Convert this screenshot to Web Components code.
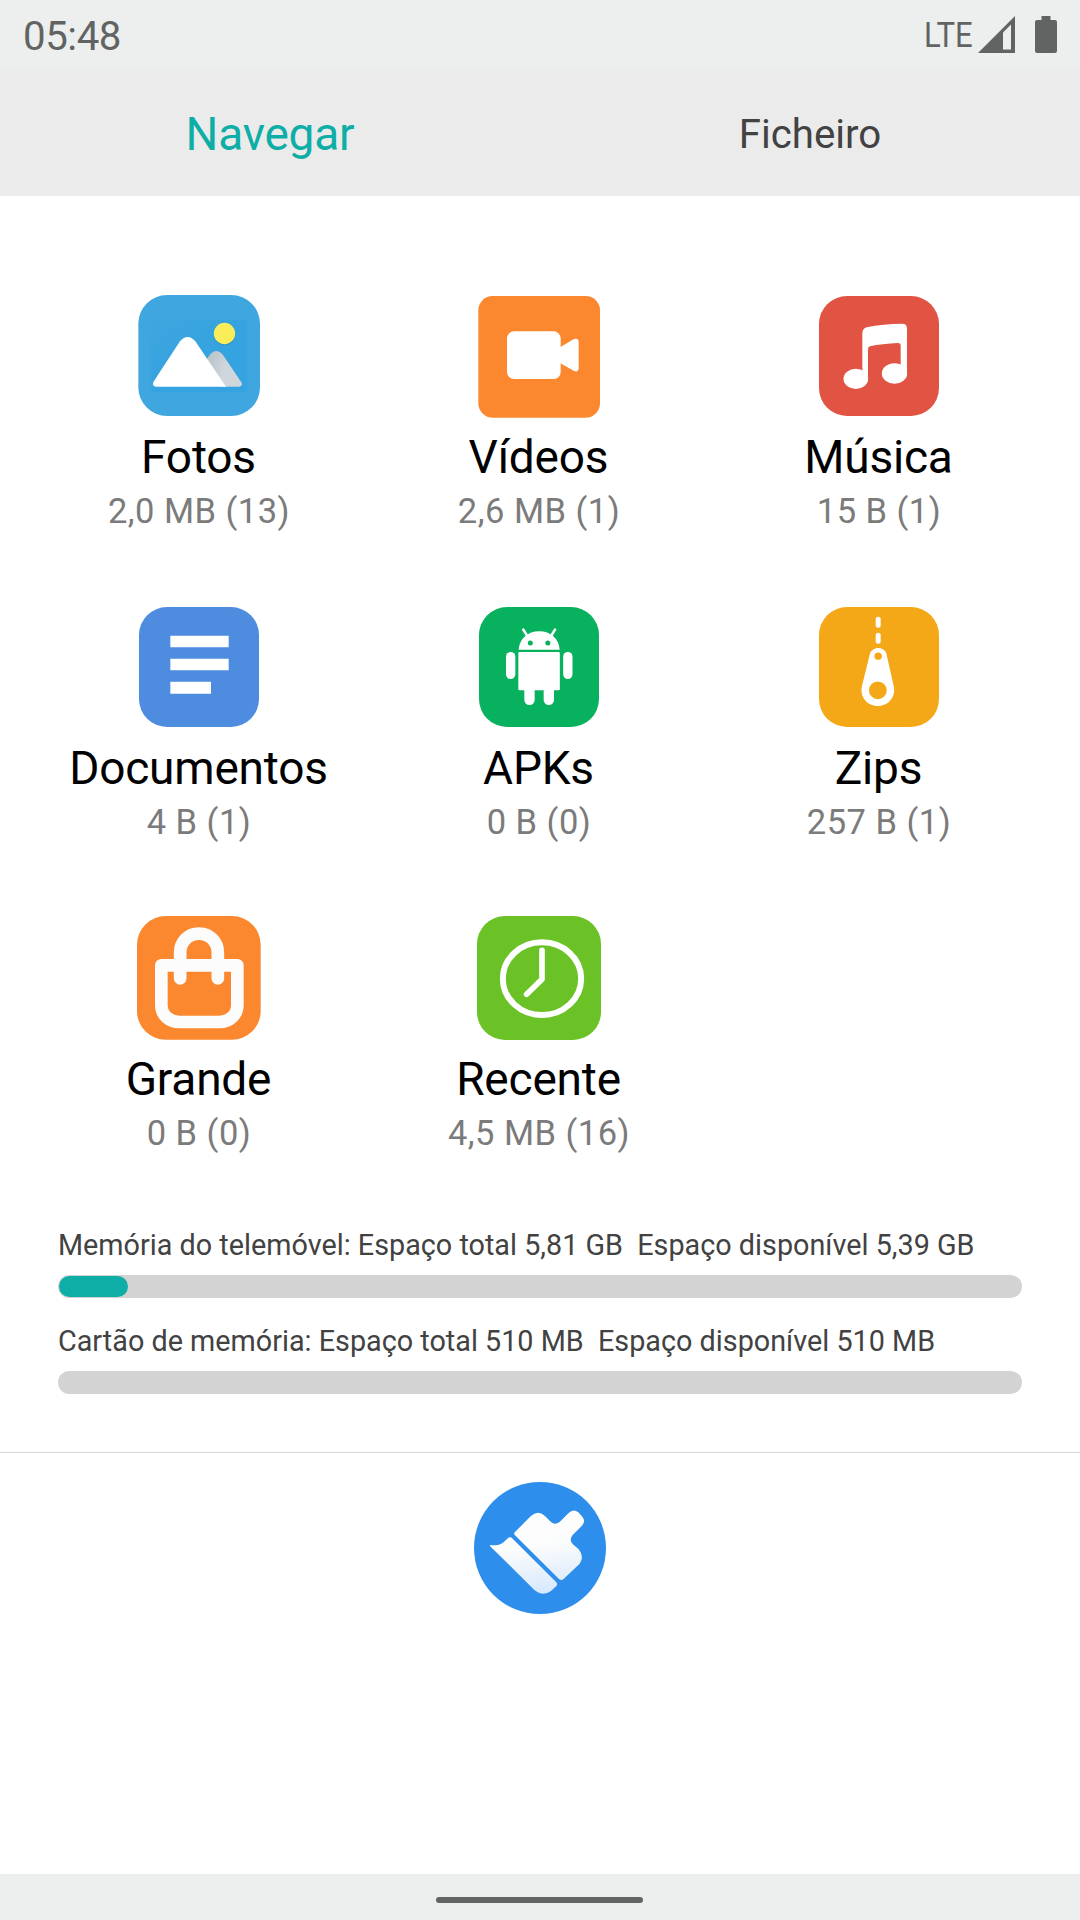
<!DOCTYPE html>
<html lang="pt">
<head>
<meta charset="utf-8">
<title>Gestor de ficheiros</title>
<style>
html,body{margin:0;padding:0;background:#fff}
body{font-family:Roboto,"Noto Sans",sans-serif}
</style>
</head>
<body>
<file-manager></file-manager>
<script>
const ICONS = {
  photos: ['219 30 396 396', `
    <defs><linearGradient id="m" x1="0" y1="0" x2="1" y2=".35"><stop offset=".2" stop-color="#bcc6cd"/><stop offset=".6" stop-color="#cfd6dc"/></linearGradient>
    <linearGradient id="b" x1="0" y1="0" x2="1" y2="1"><stop offset="0" stop-color="#3fa6df"/><stop offset=".5" stop-color="#35a3df"/><stop offset="1" stop-color="#35a3df"/></linearGradient></defs>
    <rect x="235" y="45" width="365" height="363" rx="86" fill="#3fa6df"/>
    <rect x="272" y="120" width="290" height="216" fill="url(#b)"/>
    <circle cx="494" cy="164" r="32" fill="#2b86b5" opacity=".6"/>
    <circle cx="493.500" cy="160.500" r="32" fill="#faed5a"/>
    <path d="M440 238L449 225Q469 201 489 225L544 307Q550 318 537 320H480Z" fill="url(#m)"/>
    <path d="M360 184Q383 158 406 184L498 320H289Q275 319 280 306Z" fill="#fff"/>`],
  videos: ['99 30 396 396', `
    <rect x="115" y="48" width="365" height="365" rx="43" fill="#fb882f"/>
    <rect x="201" y="154" width="161" height="143" rx="21" fill="#fff"/>
    <path d="M360 202L398 179Q415 171 416 186V264Q415 279 401 272L360 249Z" fill="#fff"/>`],
  music: ['99 30 396 396', `
    <rect x="117" y="48" width="360" height="360" rx="84" fill="#e15343"/>
    <ellipse cx="227.500" cy="296.500" rx="37" ry="30.500" fill="#fff"/>
    <ellipse cx="343.500" cy="280.500" rx="38" ry="30.500" fill="#fff"/>
    <path d="M247 280V159Q248 145 260 142Q310 131 367 131Q381 131 381 146V282H362V197Q362 189 354 189Q306 191 270 199Q264 201 264 208V298H247Z" fill="#fff"/>`],
  docs: ['219 33 396 396', `
    <rect x="237" y="51" width="360" height="360" rx="84" fill="#4e8ce0"/>
    <path d="M331 137H506V172H331ZM331 206H506V241H331ZM331 275H453V311H331Z" fill="#fff"/>`],
  apks: ['99 33 396 396', `
    <rect x="117" y="51" width="360" height="360" rx="84" fill="#08b15e"/>
    <path d="M236 179C238 147 263 124 297.500 124S357 147 359 179Z" fill="#fff"/>
    <path d="M250 119L263 140M345 119L332 140" stroke="#fff" stroke-width="8" stroke-linecap="round"/>
    <circle cx="271" cy="159" r="7.500" fill="#08b15e"/><circle cx="323.500" cy="159" r="7.500" fill="#08b15e"/>
    <rect x="235" y="186" width="124.500" height="115" rx="3" fill="#fff"/>
    <rect x="198" y="186" width="28" height="81" rx="14" fill="#fff"/>
    <rect x="369.500" y="186" width="28" height="81" rx="14" fill="#fff"/>
    <path d="M253 298H284V331Q282 345 268.500 345T253 331ZM311 298H342V331Q340 345 326.500 345T311 331Z" fill="#fff"/>`],
  zips: ['99 33 396 396', `
    <rect x="117" y="51" width="360" height="360" rx="84" fill="#f5a817"/>
    <rect x="287" y="80" width="15" height="33" rx="7.500" fill="#fff"/>
    <rect x="287" y="128" width="15" height="33" rx="7.500" fill="#fff"/>
    <path d="M269 194C274 167 316 167 320 194L341 288C349 319 326 348 293.500 348S238 319 246 288Z" fill="#fff"/>
    <circle cx="294.500" cy="198.500" r="11" fill="#f5a817"/><circle cx="293.500" cy="301" r="26.500" fill="#f5a817"/>`],
  large: ['99 36 396 396', `
    <rect x="111" y="48" width="371" height="371" rx="86" fill="#fb882f"/>
    <g fill="none" stroke="#fcfcfc" stroke-width="38" stroke-linejoin="round" stroke-linecap="round">
    <path d="M184 196H412V316C412 345 388 366 358 366H238C208 366 184 345 184 316Z"/>
    <path d="M240.500 235V158C240.500 125 265 101 297 101S353.500 125 353.500 158V235"/></g>`],
  recent: ['129 36 396 396', `
    <rect x="141" y="48" width="372" height="372" rx="84" fill="#6ac226"/>
    <g fill="none" stroke="#fff" stroke-linecap="round" stroke-linejoin="round">
    <ellipse cx="336" cy="236" rx="117.500" ry="109" stroke-width="18"/>
    <path d="M336 151V238L290 283" stroke-width="17"/></g>`],
  clean: ['132 126 396 396', `
    <defs><linearGradient id="w" gradientUnits="userSpaceOnUse" x1="310" y1="225" x2="345" y2="462"><stop offset="0" stop-color="#fefefd"/><stop offset=".4" stop-color="#fbfcfc"/><stop offset="1" stop-color="#d6e8fc"/></linearGradient></defs>
    <circle cx="330" cy="324" r="198" fill="#2e8eec"/>
    <g fill="url(#w)"><path d="M255 276L302 229Q323 208 344 227L363 246Q375 256 389 246L416 219Q430 205 445 217L457 230Q468 244 456 257L428 285Q416 299 428 312L446 328Q464 350 449 371L400 418Q393 423 387 417L255 286Q250 281 255 276Z"/>
    <path d="M181 315C205 318 215 313 232 296Q240 288 248 296L379 427Q384 433 379 438L363 453Q338 471 314 451L182 320Q177 315 181 315Z"/></g>`]
};

function define(name, render) {
  customElements.define(name, class extends HTMLElement {
    constructor() { super(); this.attachShadow({mode: 'open'}); }
    connectedCallback() { this.shadowRoot.innerHTML = render(this); }
  });
}

define('file-icon', el => {
  const [box, art] = ICONS[el.getAttribute('name')];
  return `<style>:host{display:block;width:132px;height:132px}svg{display:block;width:100%;height:100%}</style>
  <svg viewBox="${box}" aria-hidden="true">${art}</svg>`;
});

define('status-bar', () => `<style>
  :host{display:flex;box-sizing:border-box;height:69px;padding:0 23px;background:#edefee;color:#616462;align-items:flex-start;justify-content:space-between}
  .time{font-size:40.25px;line-height:48px;padding-top:13px;letter-spacing:-.45px}
  .right{display:flex;padding-top:16px}
  .net{width:50px;font-size:34.5px;line-height:40px;margin-top:-1px}
  .net span{display:inline-block;transform:scaleX(.9);transform-origin:0 50%}
  svg{display:block}
  .sig{margin-right:20px;margin-left:4px}
  </style>
  <span class="time">05:48</span>
  <div class="right"><div class="net"><span>LTE</span></div>
  <svg class="sig" width="37" height="37" viewBox="0 0 37 37"><path d="M0 37L37 0V37Z" fill="#616462"/><path d="M25 16.500L33 8.500V33.500H25Z" fill="#edefee"/></svg>
  <svg width="22" height="37" viewBox="0 0 22 37"><path d="M6.500 0H15.500V4H20Q22 4 22 6V35Q22 37 20 37H2Q0 37 0 35V6Q0 4 2 4H6.500Z" fill="#616462"/></svg></div>`);

define('tab-item', () => `<style>
  :host{flex:1;display:flex;align-items:center;justify-content:center;font-size:40.25px;line-height:54px;color:#424242;padding-top:5px}
  :host([selected]){font-size:46px;color:#0eaea6;letter-spacing:-.2px;padding-top:2px}
  </style><span><slot></slot></span>`);

define('tab-bar', () => `<style>:host{display:flex;height:127px;background:#ebebeb}</style><slot></slot>`);

define('category-tile', el => `<style>
  :host{display:flex;flex-direction:column;align-items:center;height:311px;white-space:nowrap}
  .name{font-size:46px;line-height:54px;color:#000;margin:8px 1px 0 0;letter-spacing:-.2px}
  .info{font-size:34.5px;line-height:40px;color:#7b7b7b;margin-top:7px;letter-spacing:.48px}
  </style><file-icon name="${el.getAttribute('icon')}"></file-icon>
  <div class="name"><slot></slot></div><div class="info"><slot name="info"></slot></div>`);

define('category-grid', () => `<style>
  :host{display:grid;grid-template-columns:repeat(3,340px);padding:94px 31px 0 29px}
  </style><slot></slot>`);

define('storage-meter', el => `<style>
  :host{display:block;height:96px}
  .label{font-size:28.75px;line-height:34px;color:#424242;white-space:pre;letter-spacing:.01px}
  .track{box-sizing:border-box;height:23px;margin-top:13px;border-radius:11.5px;background:#d3d3d3;padding:1px}
  .fill{height:21px;border-radius:10.5px;background:#0eaea6;width:${el.getAttribute('used')}}
  </style><div class="label"><slot></slot></div><div class="track"><div class="fill"></div></div>`);

define('nav-bar', () => `<style>
  :host{display:flex;box-sizing:border-box;height:46px;padding-right:2px;background:#edefee;align-items:center;justify-content:center;margin-top:auto}
  i{display:block;width:207px;height:6px;border-radius:3px;background:#616462;margin-top:6px}
  </style><i></i>`);

define('file-manager', () => `<style>
  :host{display:flex;flex-direction:column;width:1080px;height:1920px;overflow:hidden;background:#fff}
  .storage{padding:5px 58px 0;height:224px}
  .tool{border-top:1px solid #d6d6d6;display:flex;justify-content:center;padding-top:29px}
  </style>
  <status-bar></status-bar>
  <tab-bar><tab-item selected>Navegar</tab-item><tab-item>Ficheiro</tab-item></tab-bar>
  <category-grid>
    <category-tile icon="photos">Fotos<span slot="info">2,0 MB (13)</span></category-tile>
    <category-tile icon="videos">Vídeos<span slot="info">2,6 MB (1)</span></category-tile>
    <category-tile icon="music">Música<span slot="info">15 B (1)</span></category-tile>
    <category-tile icon="docs">Documentos<span slot="info">4 B (1)</span></category-tile>
    <category-tile icon="apks">APKs<span slot="info">0 B (0)</span></category-tile>
    <category-tile icon="zips">Zips<span slot="info">257 B (1)</span></category-tile>
    <category-tile icon="large">Grande<span slot="info">0 B (0)</span></category-tile>
    <category-tile icon="recent">Recente<span slot="info">4,5 MB (16)</span></category-tile>
  </category-grid>
  <div class="storage">
    <storage-meter used="69px">Memória do telemóvel: Espaço total 5,81 GB  Espaço disponível 5,39 GB</storage-meter>
    <storage-meter used="0">Cartão de memória: Espaço total 510 MB  Espaço disponível 510 MB</storage-meter>
  </div>
  <div class="tool"><file-icon name="clean"></file-icon></div>
  <nav-bar></nav-bar>`);
</script>
</body>
</html>
